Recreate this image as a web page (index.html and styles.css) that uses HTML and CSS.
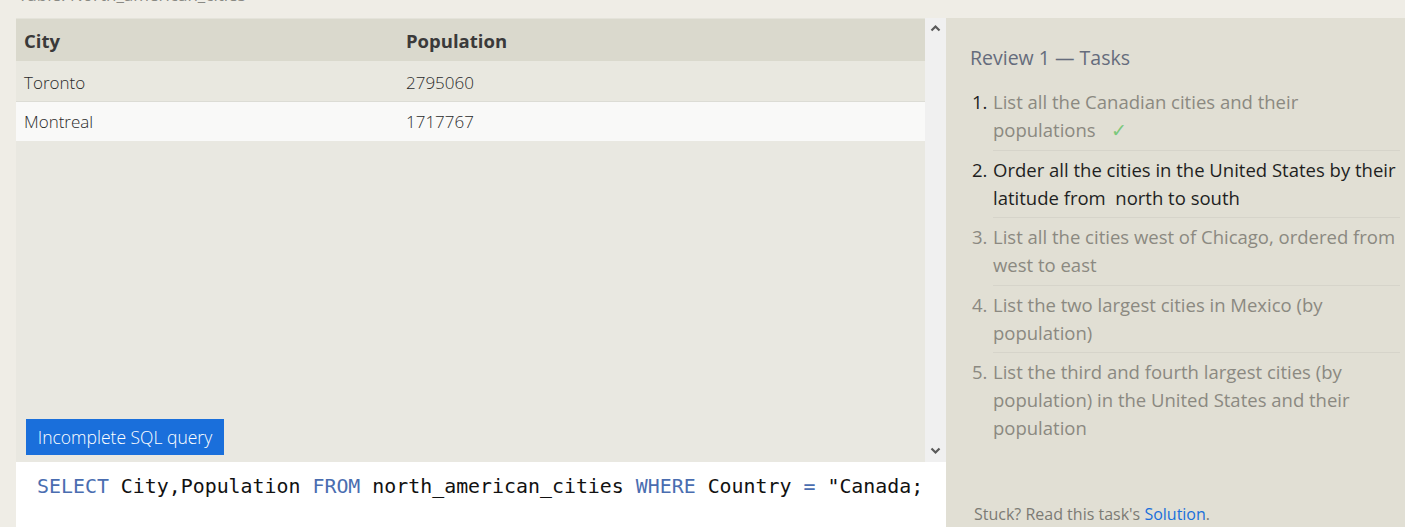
FILE: index.html
```html
<!DOCTYPE html>
<html>
<head>
<meta charset="utf-8">
<link rel="stylesheet" href="styles.css">
</head>
<body>
<div class="caption"><span class="caption-text">Table: North_american_cities</span></div>
<div class="main">
  <div class="left">
    <div class="results">
      <div class="table-area">
        <div class="row head">
          <div class="c1">City</div>
          <div class="c2">Population</div>
        </div>
        <div class="row odd">
          <div class="c1">Toronto</div>
          <div class="c2">2795060</div>
        </div>
        <div class="row even">
          <div class="c1">Montreal</div>
          <div class="c2">1717767</div>
        </div>
        <div class="spacer"></div>
        <div class="status"><span class="btn">Incomplete SQL query</span></div>
      </div>
      <div class="scrollbar">
        <svg width="11" height="8" viewBox="0 0 11 8"><polyline points="1.5,6.5 5.5,2.5 9.5,6.5" fill="none" stroke="#5a5a5a" stroke-width="2.2"/></svg>
        <svg width="11" height="8" viewBox="0 0 11 8"><polyline points="1.5,1.5 5.5,5.5 9.5,1.5" fill="none" stroke="#5a5a5a" stroke-width="2.2"/></svg>
      </div>
    </div>
    <div class="editor"><span class="kw">SELECT</span> City,Population <span class="kw">FROM</span> north_american_cities <span class="kw">WHERE</span> Country <span class="kw">=</span> "Canada;</div>
  </div>
  <div class="panel">
    <div class="title">Review 1 — Tasks</div>
    <ol class="tasks">
      <li class="task done"><span class="num">1.</span><span class="txt">List all the Canadian cities and their populations<span class="check">✓</span></span></li>
      <li class="task current"><span class="num">2.</span><span class="txt">Order all the cities in the United States by their latitude from&nbsp; north to south</span></li>
      <li class="task"><span class="num">3.</span><span class="txt">List all the cities west of Chicago, ordered from west to east</span></li>
      <li class="task"><span class="num">4.</span><span class="txt">List the two largest cities in Mexico (by population)</span></li>
      <li class="task last"><span class="num">5.</span><span class="txt">List the third and fourth largest cities (by population) in the United States and their population</span></li>
    </ol>
    <div class="stuck">Stuck? Read this task's <span class="link">Solution</span>.</div>
  </div>
</div>
</body>
</html>
```

FILE: styles.css
```css
html, body {
  margin: 0;
  padding: 0;
}
body {
  background: #efede6;
  font-family: "Open Sans", "Noto Sans", sans-serif;
  width: 1405px;
  height: 527px;
  overflow: hidden;
}
.caption {
  height: 18px;
  overflow: hidden;
  padding-left: 18px;
}
.caption-text {
  display: block;
  margin-top: -15px;
  font-size: 17px;
  line-height: 20px;
  color: #8a8a84;
}
.main {
  display: flex;
  height: 509px;
}
.left {
  width: 930px;
  margin-left: 16px;
  display: flex;
  flex-direction: column;
}
.results {
  flex: 1;
  display: flex;
  min-height: 0;
}
.table-area {
  flex: 1;
  background: #e9e8e1;
  display: flex;
  flex-direction: column;
  border-top: 1px solid #e4e3da;
}
.row {
  display: flex;
  color: #333;
}
.row .c1 {
  width: 374px;
  padding-left: 8px;
}
.row .c2 {
  flex: 1;
  padding-left: 8px;
}
.head {
  height: 42px;
  background: #dad9cd;
  align-items: center;
  font-weight: 700;
  font-size: 18.5px;
  color: #3a3a3a;
}
.odd, .even {
  height: 40px;
  align-items: center;
  font-size: 17px;
  font-weight: 300;
  color: #2a2a2a;
}
.odd {
  background: #e9e8e0;
}
.odd .c1, .odd .c2 {
  padding-top: 2px;
}
.even {
  background: #f9f9f8;
  border-top: 1px solid #dcdcd5;
  height: 39px;
}
.spacer {
  flex: 1;
}
.status {
  padding: 0 0 7px 10px;
}
.btn {
  display: inline-flex;
  align-items: center;
  justify-content: center;
  width: 198px;
  height: 36px;
  background: #1a6fdb;
  color: #ffffff;
  font-size: 17.5px;
  font-weight: 300;
}
.scrollbar {
  width: 21px;
  background: #f0f0f0;
  display: flex;
  flex-direction: column;
  justify-content: space-between;
  align-items: center;
  padding: 6px 0 7px;
}
.editor {
  height: 65px;
  background: #ffffff;
  box-sizing: border-box;
  padding: 13px 0 0 21px;
  font-family: "DejaVu Sans Mono", "Liberation Mono", monospace;
  font-size: 19.9px;
  line-height: 24px;
  color: #111;
  white-space: pre;
}
.kw {
  color: #4a6db0;
}
.panel {
  flex: 1;
  background: #e1dfd4;
  display: flex;
  flex-direction: column;
  padding: 26px 5px 0 24px;
}
.title {
  font-size: 19.5px;
  line-height: 28px;
  color: #656c7c;
}
.tasks {
  list-style: none;
  margin: 16px 0 0 0;
  padding: 0;
}
.task {
  display: flex;
  font-size: 18.5px;
  line-height: 28px;
  color: #8b8981;
}
.num {
  width: 21px;
  padding-left: 2px;
  flex: none;
}
.txt {
  flex: 1;
  padding: 0 0 5.5px;
  margin-bottom: 5px;
  border-bottom: 1px solid #d6d4ca;
}
.task.last .txt {
  border-bottom: none;
}
.done .num {
  color: #222;
}
.current .num, .current .txt {
  color: #1f1f1f;
}
.check {
  display: inline-block;
  color: #7bc87b;
  margin-left: 15px;
}
.stuck {
  margin-top: auto;
  padding: 0 0 2px 4px;
  font-size: 16px;
  line-height: 22px;
  color: #7c7b74;
}
.link {
  color: #1a6fdb;
}
```
